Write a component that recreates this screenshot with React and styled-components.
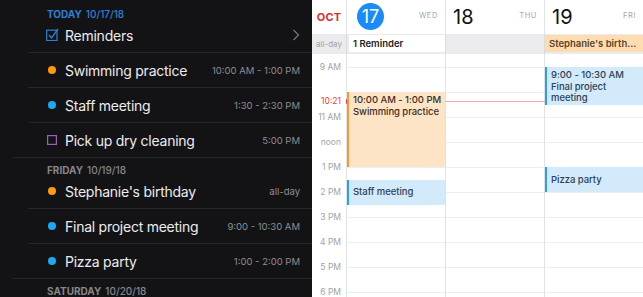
import React from 'react';
import styled, { createGlobalStyle } from 'styled-components';

const Global = createGlobalStyle`
  html, body { margin: 0; padding: 0; background: #131315; }
  body { font-family: Inter, "Noto Sans", sans-serif; -webkit-font-smoothing: antialiased; }
  #root { width: 643px; height: 297px; }
`;

const Screen = styled.div`
  width: 643px;
  height: 297px;
  display: flex;
  overflow: hidden;
`;

/* ---------- Agenda (dark list) ---------- */
const Agenda = styled.div`
  width: 312px;
  flex: none;
  background: #131315;
  padding-top: 2px;
  box-sizing: border-box;
  overflow: hidden;
`;

const SectionHeader = styled.div`
  height: 16px;
  padding: 6px 0 0 47px;
  box-sizing: border-box;
  font-size: 10px;
  line-height: 12px;
  font-weight: 500;
  color: ${p => (p.$today ? '#2f80d1' : '#86868b')};
  white-space: nowrap;
  b { font-weight: 700; margin-right: 4px; }
`;

const Row = styled.div`
  height: 35px;
  box-sizing: border-box;
  display: flex;
  align-items: center;
  margin-left: ${p => (p.$last ? 12 : 28)}px;
  padding-left: ${p => (p.$last ? 35 : 19)}px;
  padding-right: 12px;
  border-bottom: 1px solid #262629;
`;

const IconSlot = styled.div`
  width: 10px;
  height: 12px;
  margin-right: 8px;
  flex: none;
  display: flex;
  align-items: center;
  justify-content: center;
`;

const Dot = styled.span`
  width: 8px;
  height: 8px;
  border-radius: 50%;
  background: ${p => p.$color};
`;

const Title = styled.div`
  flex: 1;
  font-size: 14px;
  letter-spacing: -0.25px;
  color: #ececee;
  white-space: nowrap;
`;

const Time = styled.div`
  font-size: 9.5px;
  color: #8e8e93;
  white-space: nowrap;
`;

const CheckIcon = () => (
  <svg width="13" height="13" viewBox="0 0 13 13" style={{ flex: 'none', marginTop: -1 }}>
    <rect x="0.7" y="2.2" width="10.3" height="10.3" fill="none" stroke="#2f80d1" strokeWidth="1.2" />
    <path d="M3 7 L5.6 9.8 L12 1" fill="none" stroke="#2f80d1" strokeWidth="1.4" />
  </svg>
);

const SquareIcon = () => (
  <svg width="10" height="10" viewBox="0 0 10 10">
    <rect x="0.6" y="0.6" width="8.8" height="8.8" fill="none" stroke="#9a62b8" strokeWidth="1.2" />
  </svg>
);

const Chevron = () => (
  <svg width="8" height="12" viewBox="0 0 8 12">
    <path d="M1.5 1 L6.5 6 L1.5 11" fill="none" stroke="#707075" strokeWidth="1.4" />
  </svg>
);

const ORANGE = '#ff9a0a';
const BLUE = '#1aa9f5';

const sections = [
  {
    today: true,
    day: 'TODAY',
    date: '10/17/18',
    items: [
      { icon: 'check', title: 'Reminders', chevron: true },
      { icon: 'dot', color: ORANGE, title: 'Swimming practice', time: '10:00 AM - 1:00 PM' },
      { icon: 'dot', color: BLUE, title: 'Staff meeting', time: '1:30 - 2:30 PM' },
      { icon: 'square', title: 'Pick up dry cleaning', time: '5:00 PM' },
    ],
  },
  {
    day: 'FRIDAY',
    date: '10/19/18',
    items: [
      { icon: 'dot', color: ORANGE, title: "Stephanie's birthday", time: 'all-day' },
      { icon: 'dot', color: BLUE, title: 'Final project meeting', time: '9:00 - 10:30 AM' },
      { icon: 'dot', color: BLUE, title: 'Pizza party', time: '1:00 - 2:00 PM' },
    ],
  },
  { day: 'SATURDAY', date: '10/20/18', items: [] },
];

/* ---------- Calendar (light grid) ---------- */
const COLS = '34px repeat(3, 99px)';
const HOUR = 25;
const FIRST_LINE = 13;

const Calendar = styled.div`
  flex: 1;
  background: #fff;
  display: flex;
  flex-direction: column;
  overflow: hidden;
`;

const HeaderRow = styled.div`
  display: grid;
  grid-template-columns: ${COLS};
  height: 34px;
  flex: none;
`;

const Month = styled.div`
  color: #d8302c;
  font-size: 11px;
  font-weight: 700;
  text-align: center;
  padding-top: 10px;
  letter-spacing: 0.2px;
`;

const DayHead = styled.div`
  border-left: 1px solid #e2e2e4;
  display: flex;
  justify-content: space-between;
  align-items: flex-start;
  padding: 0 7px 0 7px;
`;

const DayNum = styled.div`
  font-size: 20px;
  line-height: 26px;
  margin-top: 4px;
  color: #111;
`;

const TodayNum = styled.div`
  width: 27px;
  height: 27px;
  border-radius: 50%;
  background: #1a8cf8;
  color: #fff;
  font-size: 18px;
  display: flex;
  align-items: center;
  justify-content: center;
  margin: 3px 0 0 3px;
`;

const DayName = styled.div`
  font-size: 7.5px;
  letter-spacing: 0.6px;
  color: #a6a6aa;
  margin-top: 11px;
`;

const AllDayRow = styled.div`
  display: grid;
  grid-template-columns: ${COLS};
  height: 20px;
  flex: none;
  background: #ebebed;
`;

const AllDayLabel = styled.div`
  font-size: 8px;
  color: #a3a3a7;
  text-align: center;
  line-height: 20px;
`;

const AllDayCell = styled.div`
  border-left: 1px solid #dcdcde;
  padding: 1px 0 2px 0;
  display: flex;
  min-width: 0;
`;

const AllDayChip = styled.div`
  flex: 1;
  min-width: 0;
  margin-left: ${p => (p.$inset ? 2 : 0)}px;
  background: ${p => p.$bg};
  color: ${p => p.$fg};
  font-size: 9.5px;
  font-weight: 600;
  line-height: 17px;
  padding: 0 4px;
  white-space: nowrap;
  overflow: hidden;
  text-overflow: ellipsis;
`;

const Body = styled.div`
  flex: 1;
  display: grid;
  grid-template-columns: ${COLS};
  position: relative;
`;

const Gutter = styled.div`
  display: flex;
  flex-direction: column;
  padding-top: 0.5px;
`;

const HourLabel = styled.div`
  height: ${HOUR}px;
  line-height: ${HOUR}px;
  flex: none;
  font-size: 8.5px;
  color: #a2a2a6;
  text-align: right;
  padding-right: 5px;
  white-space: nowrap;
`;

const DayColumn = styled.div`
  position: relative;
  border-left: 1px solid #e2e2e4;
  background-image: linear-gradient(#ededef 0 1px, transparent 1px);
  background-size: 100% ${HOUR}px;
  background-position: 0 ${FIRST_LINE}px;
`;

const Event = styled.div`
  position: absolute;
  left: 0;
  right: 0;
  box-sizing: border-box;
  background: ${p => p.$bg};
  border-left: 2px solid ${p => p.$accent};
  color: ${p => p.$fg};
  font-size: 9.5px;
  letter-spacing: -0.05px;
  font-weight: 500;
  line-height: ${p => (p.$tight ? 11.5 : 12)}px;
  padding: 2px 2px 0 4px;
  overflow: hidden;
  z-index: 2;
  display: flex;
  flex-direction: column;
  justify-content: ${p => (p.$center ? 'center' : 'flex-start')};
  ${p => (p.$center ? 'padding-top: 0;' : '')}
`;

const NowLine = styled.div`
  position: absolute;
  left: 34px;
  right: 0;
  height: 1px;
  background: #f7a9a9;
  z-index: 1;
`;

const NowDot = styled.span`
  position: absolute;
  left: -1px;
  top: -2px;
  width: 5px;
  height: 5px;
  border-radius: 50%;
  background: #e5403a;
  z-index: 3;
`;

const NowLabel = styled.div`
  position: absolute;
  left: 0;
  width: 34px;
  padding-right: 5px;
  box-sizing: border-box;
  text-align: right;
  font-size: 8.5px;
  line-height: 10px;
  color: #e5403a;
  background: #fff;
  z-index: 2;
`;

const ORANGE_EV = { bg: '#fde4c6', accent: '#f39a36', fg: '#3d2e20' };
const BLUE_EV = { bg: '#d3eafb', accent: '#2a9ff0', fg: '#2a4257' };

const yFor = h => FIRST_LINE + (h - 9) * HOUR;

const days = [
  {
    name: 'WED', num: '17', today: true,
    allDay: { text: '1 Reminder', bg: '#fff', fg: '#222', inset: true },
    events: [
      { start: 10, end: 13, lines: ['10:00 AM - 1:00 PM', 'Swimming practice'], c: ORANGE_EV },
      { start: 13.5, end: 14.5, lines: ['Staff meeting'], c: BLUE_EV, center: true },
    ],
  },
  { name: 'THU', num: '18', events: [] },
  {
    name: 'FRI', num: '19',
    allDay: { text: "Stephanie's birthday", bg: '#fddcb2', fg: '#5e4227' },
    events: [
      { start: 9, end: 10.5, lines: ['9:00 - 10:30 AM', 'Final project meeting'], c: BLUE_EV, tight: true },
      { start: 13, end: 14, lines: ['Pizza party'], c: BLUE_EV, center: true },
    ],
  },
];

const hourLabels = ['9 AM', '', '11 AM', 'noon', '1 PM', '2 PM', '3 PM', '4 PM', '5 PM', '6 PM', '7 PM'];

const nowY = Math.round(yFor(10 + 21 / 60));

export default function App() {
  return (
    <>
      <Global />
      <Screen>
        <Agenda>
          {sections.map((s, si) => (
            <div key={si}>
              <SectionHeader $today={s.today}>
                <b>{s.day}</b>{s.date}
              </SectionHeader>
              {s.items.map((it, i) => (
                <Row key={i} $last={i === s.items.length - 1}>
                  <IconSlot>
                    {it.icon === 'dot' && <Dot $color={it.color} />}
                    {it.icon === 'check' && <CheckIcon />}
                    {it.icon === 'square' && <SquareIcon />}
                  </IconSlot>
                  <Title>{it.title}</Title>
                  {it.time && <Time>{it.time}</Time>}
                  {it.chevron && <Chevron />}
                </Row>
              ))}
            </div>
          ))}
        </Agenda>

        <Calendar>
          <HeaderRow>
            <Month>OCT</Month>
            {days.map(d => (
              <DayHead key={d.num}>
                {d.today ? <TodayNum>{d.num}</TodayNum> : <DayNum>{d.num}</DayNum>}
                <DayName>{d.name}</DayName>
              </DayHead>
            ))}
          </HeaderRow>

          <AllDayRow>
            <AllDayLabel>all-day</AllDayLabel>
            {days.map(d => (
              <AllDayCell key={d.num}>
                {d.allDay && (
                  <AllDayChip $bg={d.allDay.bg} $fg={d.allDay.fg} $inset={d.allDay.inset}>
                    {d.allDay.text}
                  </AllDayChip>
                )}
              </AllDayCell>
            ))}
          </AllDayRow>

          <Body>
            <Gutter>
              {hourLabels.map((l, i) => (
                <HourLabel key={i}>{l}</HourLabel>
              ))}
            </Gutter>
            {days.map(d => (
              <DayColumn key={d.num}>
                {d.events.map((e, i) => (
                  <Event
                    key={i}
                    $bg={e.c.bg}
                    $accent={e.c.accent}
                    $fg={e.c.fg}
                    $center={e.center}
                    $tight={e.tight}
                    style={{ top: yFor(e.start), height: (e.end - e.start) * HOUR }}
                  >
                    {e.lines.map((ln, j) => (
                      <div key={j}>{ln}</div>
                    ))}
                  </Event>
                ))}
              </DayColumn>
            ))}
            <NowLabel style={{ top: nowY - 5 }}>10:21</NowLabel>
            <NowLine style={{ top: nowY }}>
              <NowDot />
            </NowLine>
          </Body>
        </Calendar>
      </Screen>
    </>
  );
}
